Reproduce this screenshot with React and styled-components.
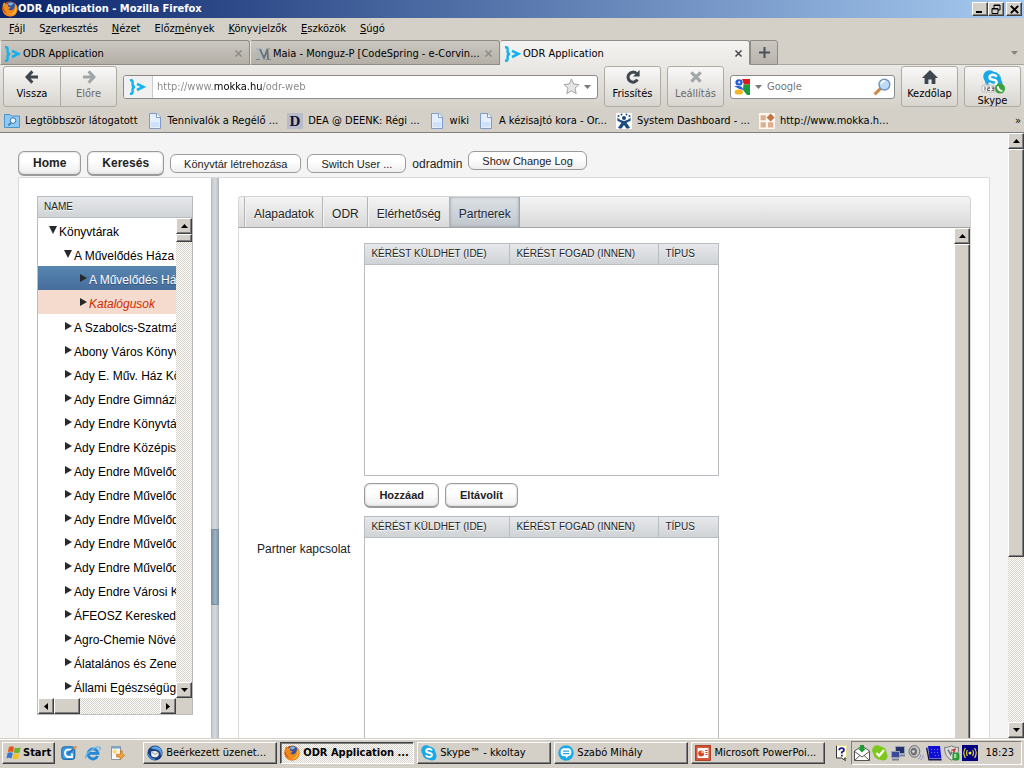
import { useState } from "react";
import styled, { createGlobalStyle, css } from "styled-components";

const menuItems = [
  ["", "F", "ájl"],
  ["S", "z", "erkesztés"],
  ["", "N", "ézet"],
  ["Előz", "m", "ények"],
  ["", "K", "önyvjelzők"],
  ["", "E", "szközök"],
  ["", "S", "úgó"],
];

const treeItems = [
  { name: "Könyvtárak", level: 0, open: true },
  { name: "A Művelődés Háza", level: 1, open: true },
  { name: "A Művelődés Ház", level: 2, kind: "selected" },
  { name: "Katalógusok", level: 2, kind: "marked" },
  { name: "A Szabolcs-Szatmár", level: 1 },
  { name: "Abony Város Könyvt", level: 1 },
  { name: "Ady E. Műv. Ház Kön", level: 1 },
  { name: "Ady Endre Gimnázi", level: 1 },
  { name: "Ady Endre Könyvtár", level: 1 },
  { name: "Ady Endre Középis", level: 1 },
  { name: "Ady Endre Művelőd", level: 1 },
  { name: "Ady Endre Művelőd", level: 1 },
  { name: "Ady Endre Művelőd", level: 1 },
  { name: "Ady Endre Művelőd", level: 1 },
  { name: "Ady Endre Művelőd", level: 1 },
  { name: "Ady Endre Városi Kö", level: 1 },
  { name: "ÁFEOSZ Keresked", level: 1 },
  { name: "Agro-Chemie Növén", level: 1 },
  { name: "Álatalános és Zene", level: 1 },
  { name: "Állami Egészségügy", level: 1 },
];

const pageTabs = ["Alapadatok", "ODR", "Elérhetőség", "Partnerek"];

/* ---------- icons ---------- */

const Firefox = () => (
  <svg width="16" height="16" viewBox="0 0 16 16">
    <circle cx="8" cy="8" r="7.6" fill="#d9580c" />
    <circle cx="8.6" cy="6.4" r="5.4" fill="#2b54a8" />
    <path d="M6 2.2Q9 .8 11.5 2.6Q9.8 5 7.4 4.4z" fill="#7fb2e8" />
    <path d="M1 3Q1.6 1.6 2.6 1.2Q2.8 2.8 4.2 3.2Q6 2.8 6.8 3.6Q5.6 4.6 6 5.6L8.6 6.2Q8 7.8 6.4 8Q7.4 9.8 9.8 9.2Q12 8.6 12.6 6Q13.4 3.6 12.4 2Q15.6 4 15.5 8.4Q15 15 8.2 15.6Q1 15 .5 8.6Q.4 5 1 3z" fill="#f08a1c" />
    <path d="M13.6 4.4Q15.2 7 14 10Q12 14 8 14Q12.6 12.4 13.6 8z" fill="#ffd84a" />
    <path d="M1 5Q1.4 10.6 5.4 12.4Q1.6 12 .8 8z" fill="#b03a0a" />
  </svg>
);

const OdrLogo = () => (
  <svg width="16" height="16" viewBox="0 0 16 16" fill="none" stroke="#12b2ee">
    <path d="M0 1.2H1Q2.6 1.2 2.6 3V5.8Q2.6 7.8 5 8Q2.6 8.2 2.6 10.2V13Q2.6 14.8 1 14.8H0" strokeWidth="2.4" />
    <path d="M7 4.8L13.4 7.9L7 11" strokeWidth="2.6" />
  </svg>
);

const MaiaIcon = () => (
  <svg width="16" height="16" viewBox="0 0 16 16" fill="none">
    <path d="M1 3H3.4L8 12.4M3 4V13" stroke="#a8b4bc" strokeWidth="1.4" />
    <path d="M5 3L9 12L12.4 3.4L13 13" stroke="#66727a" strokeWidth="1.8" />
    <path d="M1 13.5H5M11 13.5H16M11.4 3H15" stroke="#7b878f" strokeWidth="1.2" />
  </svg>
);

const CloseX = ({ color = "#4b4b4b", size = 9, width = 1.6 }) => (
  <svg width={size} height={size} viewBox="0 0 9 9">
    <path d="M1.5 1.5L7.5 7.5M7.5 1.5L1.5 7.5" stroke={color} strokeWidth={width} />
  </svg>
);

const ArrowLeft = () => (
  <svg width="14" height="14" viewBox="0 0 14 14">
    <path d="M7.4 1.4L2 7L7.4 12.6M2.6 7H13" fill="none" stroke="#3d474f" strokeWidth="3" />
  </svg>
);

const ArrowRight = () => (
  <svg width="14" height="14" viewBox="0 0 14 14">
    <path d="M6.6 1.4L12 7L6.6 12.6M11.4 7H1" fill="none" stroke="#a3a6a8" strokeWidth="3" />
  </svg>
);

const ReloadIcon = () => (
  <svg width="14" height="14" viewBox="0 0 14 14">
    <path d="M10.4 3.4A5 5 0 1 0 11.4 9.6" fill="none" stroke="#3d474f" strokeWidth="3" />
    <path d="M13.6 0V6.6H7z" fill="#3d474f" />
  </svg>
);

const HomeIcon = () => (
  <svg width="16" height="14" viewBox="0 0 16 14">
    <path d="M8 0L16 8H13.4V14H9.6V9.4H6.4V14H2.6V8H0z" fill="#3d474f" />
  </svg>
);

const StarIcon = () => (
  <svg width="17" height="17" viewBox="0 0 17 17">
    <path d="M8.5 1L10.7 6L16 6.5L12 10.1L13.2 15.6L8.5 12.8L3.8 15.6L5 10.1L1 6.5L6.3 6z" fill="#e6e6e6" stroke="#a2a2a2" />
  </svg>
);

const GoogleIcon = () => (
  <svg width="16" height="16" viewBox="0 0 16 16">
    <path d="M8 0H16V5.4H10z" fill="#e01818" />
    <path d="M9.4 5.4H16V16H13L9 11z" fill="#189a3e" />
    <ellipse cx="5" cy="3.4" rx="3.6" ry="3.2" fill="#2a5fd8" />
    <ellipse cx="5.2" cy="3.2" rx="1" ry="1.3" fill="#dfe8fb" />
    <path d="M0 7H5Q9 7.4 9 11L5.4 10z" fill="#2a5fd8" />
    <ellipse cx="4.8" cy="13" rx="4.2" ry="2.6" fill="#f4b520" />
  </svg>
);

const Magnifier = () => (
  <svg width="18" height="18" viewBox="0 0 18 18">
    <path d="M1.6 16.4L7.6 10.4" stroke="#c98a4a" strokeWidth="3" />
    <circle cx="11.4" cy="6.6" r="5.4" fill="#bcdcf6" stroke="#6f93c0" strokeWidth="1.4" />
    <path d="M8 6Q9 3 12 2.8" stroke="#fff" strokeWidth="1.6" fill="none" />
  </svg>
);

const SkypeCloud = ({ size = 16, phone }) => (
  <svg width={size} height={size} viewBox={phone ? "0 0 24 24" : "0 0 16 16"}>
    <g transform={phone ? "translate(2 0) scale(1.25)" : ""}>
      <circle cx="5.2" cy="5.2" r="5" fill="#19a9e6" />
      <circle cx="8" cy="8" r="6.6" fill="#19a9e6" />
      <circle cx="11" cy="11" r="4.6" fill="#19a9e6" />
      <path d="M11 5.4Q10 3.8 8 3.8Q5.2 4 5.2 6Q5.4 7.4 8 7.8Q11 8.2 11 10Q10.8 12 8 12Q5.6 12 5 10.2" fill="none" stroke="#fff" strokeWidth="1.9" />
    </g>
    {phone && (
      <>
        <rect x="1" y="15" width="14" height="7" rx="2" fill="#f2f2f2" stroke="#bbb" />
        <path d="M4 16.5v4M6.4 17h2v1.6h-2V20.5h2.6M10.6 17h2.4v3.4h-2.4M11 18.6h2" fill="none" stroke="#666" />
        <circle cx="19" cy="18.6" r="5" fill="#39a23c" />
        <path d="M16.8 16.2Q17 20.6 21.4 21" fill="none" stroke="#fff" strokeWidth="2" />
      </>
    )}
  </svg>
);

const FolderSearch = () => (
  <svg width="16" height="16" viewBox="0 0 16 16">
    <path d="M.5 1.5H6L7.5 3H15.5V14.5H.5z" fill="#8fc8f0" stroke="#4a94cc" />
    <circle cx="9" cy="7.6" r="2.8" fill="#e2f3ff" stroke="#3a78ac" />
    <path d="M7 9.8L4.4 12.4" stroke="#3a78ac" strokeWidth="1.6" />
  </svg>
);

const PageIcon = () => (
  <svg width="16" height="16" viewBox="0 0 16 16">
    <path d="M2.5 .5H10L13.5 4V15.5H2.5z" fill="#e4effe" stroke="#7f9cc8" />
    <path d="M9.5 .5V4.5H13.5" fill="#fff" stroke="#7f9cc8" />
    <path d="M4 9H12V14H4z" fill="#cfe0fa" />
  </svg>
);

const DIcon = () => (
  <svg width="16" height="16" viewBox="0 0 16 16">
    <rect width="16" height="16" fill="#b9bcc8" />
    <text x="8" y="13" textAnchor="middle" fontFamily="Liberation Serif, serif" fontWeight="bold" fontSize="15" fill="#10103a">D</text>
  </svg>
);

const JiraIcon = () => (
  <svg width="16" height="16" viewBox="0 0 16 16">
    <rect width="16" height="16" fill="#fff" />
    <g fill="#1b4a80">
      <circle cx="2.5" cy="3" r="1" />
      <circle cx="5.5" cy="1.4" r="1" />
      <circle cx="10.5" cy="1.4" r="1" />
      <circle cx="13.5" cy="3" r="1" />
      <circle cx="8" cy="5" r="2" />
      <path d="M1.2 4.8Q5 8 8 8Q11 8 14.8 4.8L14.4 8Q11 9 10.6 10L14 14.4L12.6 15.6H10.4L8 12L5.6 15.6H3.4L2 14.4L5.4 10Q5 9 1.6 8z" />
    </g>
  </svg>
);

const MokkaIcon = () => (
  <svg width="16" height="16" viewBox="0 0 16 16">
    <rect width="16" height="16" fill="#fff6ee" />
    <path d="M1.6 2.2H6.8V7.2H1.6zM1.6 9.2H6.8V14.4H1.6zM9 9.2H14.2V14.4H9z" fill="#ddae90" />
    <path d="M11.6 .4L15.6 4.4L11.6 8.4L7.6 4.4z" fill="#bd7748" />
  </svg>
);

const WindowsFlag = () => (
  <svg width="16" height="16" viewBox="0 0 16 16">
    <path d="M3 2Q5.4 .6 8 2L7 7.2Q4.4 5.8 1.8 7.2z" fill="#e8541c" />
    <path d="M8.8 2.4Q11.4 3.8 14.8 2.2L13.6 7.4Q10.6 8.8 7.8 7.4z" fill="#6cb52c" />
    <path d="M1.6 8Q4.2 6.6 6.8 8L5.6 13.4Q3 12 .4 13.4z" fill="#3a76d8" />
    <path d="M7.6 8.2Q10.4 9.6 13.4 8.2L12.2 13.6Q9.4 15 6.4 13.6z" fill="#f7bf1c" />
  </svg>
);

const DesktopIcon = () => (
  <svg width="16" height="16" viewBox="0 0 16 16">
    <rect x=".8" y="1.8" width="13" height="12.6" rx="2.5" fill="#3c9be0" stroke="#1a62a4" />
    <path d="M10.6 4.6H6.6Q4 5 4 8.2Q4 11.6 7 12H11V8.6" fill="none" stroke="#fff" strokeWidth="1.8" />
    <path d="M6.6 8.8L13.6 3" fill="none" stroke="#2c68a8" strokeWidth="1.6" />
    <path d="M12.4 4L15.4 1.4" stroke="#e88a34" strokeWidth="2" />
  </svg>
);

const ExplorerIcon = () => (
  <svg width="16" height="16" viewBox="0 0 16 16">
    <path d="M12.6 11A5 5 0 1 1 13 8.4H4" fill="none" stroke="#2488d8" strokeWidth="2.8" />
    <path d="M1 13.6Q-.4 10 6 5.4Q13 .4 15 2.4Q15.6 3.6 14.4 5.4" fill="none" stroke="#63b6ee" strokeWidth="1.3" />
  </svg>
);

const MailTask = () => (
  <svg width="16" height="16" viewBox="0 0 16 16">
    <path d="M2.5 1.5H11.5V14.5H2.5z" fill="#f6f8fb" stroke="#8c94a4" />
    <path d="M3 1.5H11V3.6H3z" fill="#7fa6cc" />
    <circle cx="5.8" cy="6.6" r="2.2" fill="#f6dc74" />
    <path d="M7.6 9.2H11.4V5.4L13.2 6V8.4L15.6 10.4L11 14.6V12H7.6z" fill="#eea63a" stroke="#bf701c" strokeWidth=".7" />
  </svg>
);

const Thunderbird = () => (
  <svg width="16" height="16" viewBox="0 0 16 16">
    <circle cx="8" cy="8" r="7.6" fill="#1c3f7c" />
    <path d="M3.6 3Q8 -.6 13 3Q16.4 7 14 11.6Q14.2 6 9.6 4.6Q5.4 4.2 3.6 3z" fill="#5aa3e4" />
    <path d="M4 6.6Q8 5 11.4 7.4Q12.6 10 10 12Q6.6 13 4.4 11z" fill="#f0f0ea" />
    <path d="M4.4 7L8.4 9.4L11 7.6" fill="none" stroke="#8c99a8" />
    <path d="M1 9Q2.6 14 8 14.4" fill="none" stroke="#4286cc" strokeWidth="1.6" />
  </svg>
);

const ChatIcon = () => (
  <svg width="16" height="16" viewBox="0 0 16 16">
    <circle cx="8" cy="8" r="7.7" fill="#19a9e6" />
    <path d="M5.4 3.2H10.6Q13.4 3.6 13.4 7.2Q13.4 10.6 10.4 11L8 13.6V11.2H5.4Q2.6 10.6 2.6 7.2Q2.6 3.6 5.4 3.2z" fill="#fff" />
    <path d="M5 6.2H11M5 8.6H11" stroke="#19a9e6" strokeWidth="1.3" />
  </svg>
);

const PowerPointIcon = () => (
  <svg width="16" height="16" viewBox="0 0 16 16">
    <rect x=".6" y=".6" width="14.8" height="14.8" fill="#d8593a" stroke="#a83a1c" />
    <rect x="2.6" y="3" width="10.8" height="10" fill="#fff" />
    <circle cx="6.2" cy="8.4" r="3" fill="#cc4a24" />
    <path d="M6.4 8.2V5.4A3 3 0 0 1 9.2 8.2z" fill="#f6c0a0" />
    <path d="M10 5.5H12.6M10.4 7.5H12.6M10.4 9.5H12.6" stroke="#cc4a24" />
  </svg>
);

const HelpIcon = () => (
  <svg width="12" height="16" viewBox="0 0 12 16">
    <path d="M.5 .5H10.5V13H8.5L9.5 15.5L5.5 13H.5z" fill="#fffff0" />
    <path d="M.5 .5V13H5.5L9.5 15.5L8.5 13H10.5" fill="none" stroke="#333" />
    <path d="M.5 .5H10.5V13" fill="none" stroke="#e6e08c" />
    <path d="M3.2 5.2Q3.2 3.2 5.6 3.2Q8 3.2 8 5Q8 6.2 5.8 7.2V8.6M5.8 9.8V11.6" fill="none" stroke="#1a1a8c" strokeWidth="1.8" />
  </svg>
);

const MailDown = () => (
  <svg width="16" height="16" viewBox="0 0 16 16">
    <path d="M.5 6L8 1L15.5 6V15.5H.5z" fill="#fff" stroke="#555" />
    <path d="M.5 6.4L8 12L15.5 6.4M.5 15.5L6 10.4M15.5 15.5L10 10.4" fill="none" stroke="#555" />
    <path d="M6 0H10V3.6H12.2L8 7.6L3.8 3.6H6z" fill="#1c9c34" />
  </svg>
);

const SkypeOnline = () => (
  <svg width="16" height="16" viewBox="0 0 16 16" fill="#7cc81c">
    <circle cx="5.2" cy="5.2" r="5" />
    <circle cx="8" cy="8" r="6.6" />
    <circle cx="11" cy="11" r="4.6" />
    <path d="M4.4 8L7.2 10.8L12 5" fill="none" stroke="#fff" strokeWidth="2.2" />
  </svg>
);

const NetworkIcon = () => (
  <svg width="16" height="16" viewBox="0 0 16 16">
    <rect x="5.5" y="1.5" width="9" height="7" fill="#24306c" stroke="#9aa2b8" />
    <path d="M9 10.5H15" stroke="#7a8298" strokeWidth="2" />
    <rect x="1.5" y="6.5" width="8" height="6" fill="#3a4c98" stroke="#9aa2b8" />
    <path d="M2 14.5H9" stroke="#7a8298" strokeWidth="2" />
  </svg>
);

const SpeakerIcon = () => (
  <svg width="16" height="16" viewBox="0 0 16 16">
    <ellipse cx="6.4" cy="6.4" rx="5.4" ry="5.8" fill="#c9c9c9" stroke="#6c6c6c" />
    <ellipse cx="5.8" cy="6.6" rx="3.2" ry="3.8" fill="#707070" />
    <circle cx="5.4" cy="6.6" r="1.4" fill="#ddd" />
    <path d="M10 14Q13 12.8 13 9.4M12.6 15Q15.4 13 15.4 10" fill="none" stroke="#8c94cc" />
  </svg>
);

const MonitorIcon = () => (
  <svg width="16" height="16" viewBox="0 0 16 16">
    <path d="M2 1H14L15.4 13.6H3.4z" fill="#1010d4" />
    <path d="M5 4.5H6M8 4.5H9M11 4.5H12M5 7.5H6M8 7.5H9M11 7.5H12M9 10.5H10M12 10.5H13" stroke="#6c7cff" />
    <path d="M.6 2.6L3 14.8H15.6" fill="none" stroke="#141450" strokeWidth="1.4" />
  </svg>
);

const ShieldIcon = () => (
  <svg width="16" height="16" viewBox="0 0 16 16">
    <path d="M.6 2.4Q5 2.6 7.4 .8Q10 2.6 14.6 2.4Q15 12 7.6 15.2Q.4 12 .6 2.4z" fill="#dcdcdc" stroke="#777" />
    <path d="M4 4.6L6.6 9.4L8 6.6" fill="none" stroke="#777" strokeWidth="1.6" />
    <path d="M7.4 5.4L11 4.4L9.4 8" fill="none" stroke="#c03030" strokeWidth="1.4" />
    <rect x="8.4" y="7.4" width="7" height="8" rx="2" fill="#2c9a3a" />
    <rect x="10" y="9" width="2.4" height="4" fill="#9be0a0" />
  </svg>
);

const RadioIcon = () => (
  <svg width="16" height="16" viewBox="0 0 16 16">
    <rect width="16" height="16" fill="#000080" />
    <g fill="none" stroke="#f0e428" strokeWidth="1.1">
      <path d="M5.4 5Q3.8 8 5.4 11M10.6 5Q12.2 8 10.6 11M3.4 3Q.2 8 3.4 13M12.6 3Q15.8 8 12.6 13" />
    </g>
    <circle cx="8" cy="8" r="1.5" fill="#f0e428" />
  </svg>
);

const arrowPaths = {
  up: "M0 4H7L3.5 0z",
  down: "M0 0H7L3.5 4z",
  left: "M4 0V7L0 3.5z",
  right: "M0 0V7L4 3.5z",
};

const Arrow = ({ dir, color = "#000" }) => {
  const flat = dir === "up" || dir === "down";
  return (
    <svg width={flat ? 7 : 4} height={flat ? 4 : 7}>
      <path d={arrowPaths[dir]} fill={color} />
    </svg>
  );
};

const TreeArrow = ({ open }) => (
  <svg width="8" height="8" viewBox="0 0 8 8">
    <path d={open ? "M0 0H8L4 8z" : "M1 0V8L8 4z"} fill="#26282b" />
  </svg>
);

/* ---------- classic windows scrollbar ---------- */

const ScrollBar = ({ horizontal, thumb }) => (
  <ScrollTrack $horizontal={horizontal}>
    <ScrollButton aria-label={horizontal ? "Balra" : "Fel"}>
      <Arrow dir={horizontal ? "left" : "up"} />
    </ScrollButton>
    <ScrollSpace $horizontal={horizontal}>
      <ScrollThumb $size={thumb} />
    </ScrollSpace>
    <ScrollButton aria-label={horizontal ? "Jobbra" : "Le"}>
      <Arrow dir={horizontal ? "right" : "down"} />
    </ScrollButton>
  </ScrollTrack>
);

const PartnerTable = ({ height }) => (
  <PartnerBox $height={height}>
    <PartnerGrid>
      <thead>
        <tr>
          <PartnerTh $width="144px">KÉRÉST KÜLDHET (IDE)</PartnerTh>
          <PartnerTh $width="149px">KÉRÉST FOGAD (INNEN)</PartnerTh>
          <PartnerTh>TÍPUS</PartnerTh>
        </tr>
      </thead>
      <tbody />
    </PartnerGrid>
  </PartnerBox>
);

const App = () => {
  const [tab, setTab] = useState("Partnerek");

  return (
    <>
      <GlobalStyle />
      <Window>
        <TitleBar>
          <Firefox />
          <TitleText>ODR Application - Mozilla Firefox</TitleText>
          <WindowButton aria-label="Kis méret">
            <svg width="12" height="10"><path d="M2 8H8" stroke="#000" strokeWidth="2" /></svg>
          </WindowButton>
          <WindowButton aria-label="Előző méret">
            <svg width="12" height="10">
              <path d="M4 1H10V6H8M4 1V4M4 1.5H10M2 4.5H8V9.5H2zM2 5H8" fill="none" stroke="#000" />
            </svg>
          </WindowButton>
          <WindowButton $last aria-label="Bezárás">
            <CloseX color="#000" size={11} width={1.6} />
          </WindowButton>
        </TitleBar>

        <MenuBar>
          {menuItems.map(([before, key, after]) => (
            <MenuItem key={key + after}>
              {before}
              <u>{key}</u>
              {after}
            </MenuItem>
          ))}
        </MenuBar>

        <BrowserTabs>
          <BrowserTab>
            <OdrLogo />
            <TabTitle>ODR Application</TabTitle>
            <CloseX color="#8f8c86" />
          </BrowserTab>
          <BrowserTab>
            <MaiaIcon />
            <TabTitle>Maia - Monguz-P [CodeSpring - e-Corvin...</TabTitle>
            <CloseX color="#8f8c86" />
          </BrowserTab>
          <BrowserTab $active>
            <OdrLogo />
            <TabTitle>ODR Application</TabTitle>
            <CloseX />
          </BrowserTab>
          <NewTab aria-label="Új lap">
            <svg width="11" height="11"><path d="M5.5 0V11M0 5.5H11" stroke="#4a5258" strokeWidth="2" /></svg>
          </NewTab>
          <TabsMenu aria-label="Lapok"><Arrow dir="down" color="#85827c" /></TabsMenu>
        </BrowserTabs>

        <NavBar>
          <NavGroup>
            <NavButton $joined><ArrowLeft />Vissza</NavButton>
            <NavButton $joined $disabled><ArrowRight />Előre</NavButton>
          </NavGroup>
          <UrlBox>
            <Identity><OdrLogo /></Identity>
            <UrlInput aria-label="Cím" defaultValue="http://www.mokka.hu/odr-web" />
            <StarIcon />
            <Arrow dir="down" color="#777" />
          </UrlBox>
          <NavButton><ReloadIcon />Frissítés</NavButton>
          <NavButton $disabled><CloseX color="#a3a6a8" size={14} width={2} />Leállítás</NavButton>
          <SearchBox>
            <GoogleIcon />
            <Arrow dir="down" color="#777" />
            <SearchInput aria-label="Keresés" placeholder="Google" />
            <Magnifier />
          </SearchBox>
          <NavButton><HomeIcon />Kezdőlap</NavButton>
          <NavButton><SkypeCloud size={24} phone />Skype</NavButton>
        </NavBar>

        <Bookmarks>
          <Bookmark href="#"><FolderSearch />Legtöbbször látogatott</Bookmark>
          <Bookmark href="#"><PageIcon />Tennivalók a Regélő ...</Bookmark>
          <Bookmark href="#"><DIcon />DEA @ DEENK: Régi ...</Bookmark>
          <Bookmark href="#"><PageIcon />wiki</Bookmark>
          <Bookmark href="#"><PageIcon />A kézisajtó kora - Or...</Bookmark>
          <Bookmark href="#"><JiraIcon />System Dashboard - ...</Bookmark>
          <Bookmark href="#"><MokkaIcon />http://www.mokka.h...</Bookmark>
          <More aria-label="További könyvjelzők">»</More>
        </Bookmarks>

        <Viewport>
          <Page>
            <PageToolbar>
              <ToolbarGroup>
                <MainButton>Home</MainButton>
                <MainButton>Keresés</MainButton>
                <SmallButton>Könyvtár létrehozása</SmallButton>
                <SmallButton>Switch User ...</SmallButton>
                <span>odradmin</span>
              </ToolbarGroup>
              <SmallButton>Show Change Log</SmallButton>
            </PageToolbar>

            <SplitPanel>
              <LeftPane>
                <TreeBox>
                  <TreeHeader>NAME</TreeHeader>
                  <TreeBody>
                    <TreeList>
                      {treeItems.map((item, i) => (
                        <TreeRow key={i} $level={item.level} $kind={item.kind}>
                          <TreeArrow open={item.open} />
                          {item.name}
                        </TreeRow>
                      ))}
                    </TreeList>
                    <ScrollBar thumb={8} />
                  </TreeBody>
                  <TreeFooter>
                    <ScrollBar horizontal thumb={26} />
                  </TreeFooter>
                </TreeBox>
              </LeftPane>
              <Splitter><SplitHandle /></Splitter>
              <RightPane>
                <TabBar>
                  {pageTabs.map((name) => (
                    <PageTab key={name} $active={tab === name} onClick={() => setTab(name)}>
                      {name}
                    </PageTab>
                  ))}
                </TabBar>
                <TabContent>
                  <Form>
                    <FormLabel>Partner kapcsolat</FormLabel>
                    <FormField>
                      <PartnerTable height={233} />
                      <FieldButtons>
                        <MainButton $compact>Hozzáad</MainButton>
                        <MainButton $compact>Eltávolít</MainButton>
                      </FieldButtons>
                      <PartnerTable height={338} />
                    </FormField>
                  </Form>
                  <ScrollBar thumb={600} />
                </TabContent>
              </RightPane>
            </SplitPanel>
          </Page>
          <ScrollBar thumb={408} />
        </Viewport>

        <TaskBar>
          <StartButton><WindowsFlag />Start</StartButton>
          <QuickLaunch>
            <DesktopIcon />
            <ExplorerIcon />
            <MailTask />
          </QuickLaunch>
          <Tasks>
            <Task><Thunderbird />Beérkezett üzenet...</Task>
            <Task $active><Firefox />ODR Application ...</Task>
            <Task><SkypeCloud />Skype™ - kkoltay</Task>
            <Task><ChatIcon />Szabó Mihály</Task>
            <Task><PowerPointIcon />Microsoft PowerPoi...</Task>
          </Tasks>
          <HelpIcon />
          <Tray>
            <MailDown />
            <SkypeOnline />
            <NetworkIcon />
            <SpeakerIcon />
            <MonitorIcon />
            <ShieldIcon />
            <RadioIcon />
            <Clock>18:23</Clock>
          </Tray>
        </TaskBar>
      </Window>
    </>
  );
};
export default App;

const uiFont = `"DejaVu Sans Condensed", "DejaVu Sans", sans-serif`;
const pageFont = `"Liberation Sans", Arial, sans-serif`;

const GlobalStyle = createGlobalStyle`
  * {
    box-sizing: border-box;
  }
  body {
    margin: 0;
    background: #d4d0c8;
  }
  button, input {
    margin: 0;
    padding: 0;
    border: 0;
    background: none;
    color: inherit;
    font: inherit;
  }
  svg {
    flex: none;
  }
`;

const raised = css`
  border: 1px solid;
  border-color: #fff #404040 #404040 #fff;
  box-shadow: inset -1px -1px #808080;
  background: #d4d0c8;
`;

const dither = css`
  background: conic-gradient(#fff 25%, #d4d0c8 0 50%, #fff 0 75%, #d4d0c8 0) 0 0 / 2px 2px;
`;

const Window = styled.div`
  display: flex;
  flex-direction: column;
  height: 100vh;
  overflow: hidden;
  font: 11px/14px ${uiFont};
  color: #000;
  background: #d4d0c8;
  white-space: nowrap;
`;

const TitleBar = styled.header`
  display: flex;
  align-items: center;
  height: 18px;
  flex: none;
  padding: 0 2px;
  background: linear-gradient(90deg, #0a246a, #a6caf0);
`;

const TitleText = styled.span`
  flex: 1;
  color: #fff;
  font-weight: bold;
`;

const WindowButton = styled.button`
  ${raised}
  width: 16px;
  height: 14px;
  display: flex;
  align-items: center;
  justify-content: center;
  margin-left: ${(props) => (props.$last ? "2px" : "0")};
`;

const MenuBar = styled.nav`
  display: flex;
  flex: none;
  align-items: center;
  height: 22px;
  padding-left: 2px;
`;

const MenuItem = styled.button`
  padding: 0 7px;
`;

const BrowserTabs = styled.div`
  display: flex;
  flex: none;
  height: 25px;
`;

const BrowserTab = styled.div`
  flex: 0 1 250px;
  min-width: 0;
  display: flex;
  align-items: center;
  gap: 2px;
  padding: 2px 6px 0 4px;
  border: 1px solid #8f8c86;
  border-left-color: #e8e6e2;
  border-radius: 3px 3px 0 0;
  background: linear-gradient(#cbc8c1, #b3afa7);
  ${(props) =>
    props.$active &&
    css`
      background: linear-gradient(#f4f3f1, #ebe9e6);
      border-bottom-color: #ebe9e6;
    `}
`;

const TabTitle = styled.span`
  flex: 1;
  overflow: hidden;
`;

const NewTab = styled.button`
  width: 28px;
  padding-top: 4px;
  border: 1px solid #8f8c86;
  border-radius: 0 3px 0 0;
  background: linear-gradient(#cbc8c1, #b8b4ad);
`;

const TabsMenu = styled.button`
  flex: 1;
  text-align: right;
  padding-right: 6px;
  border-bottom: 1px solid #aaa7a0;
`;

const NavBar = styled.div`
  display: flex;
  flex: none;
  align-items: center;
  gap: 6px;
  height: 45px;
  padding: 0 3px 2px;
  background: linear-gradient(#ebe9e6, #d4d0c8);
`;

const NavGroup = styled.div`
  display: flex;
  border: 1px solid #aeaba5;
  border-radius: 3px;
  background: linear-gradient(#f8f8f7, #d8d5cf);
`;

const NavButton = styled.button`
  width: 57px;
  height: 41px;
  display: flex;
  flex-direction: column;
  align-items: center;
  justify-content: space-between;
  padding: 3px 0 5px;
  color: ${(props) => (props.$disabled ? "#6a6a6a" : "#000")};
  ${(props) =>
    props.$joined
      ? css`
          height: 39px;
          width: 56px;
          & + & {
            border-left: 1px solid #aeaba5;
          }
        `
      : css`
          border: 1px solid #aeaba5;
          border-radius: 3px;
          background: linear-gradient(#f8f8f7, #d8d5cf);
        `}
  &:last-child {
    padding-bottom: ${(props) => (props.$joined ? "5px" : "0")};
  }
`;

const UrlBox = styled.div`
  flex: 1;
  min-width: 0;
  display: flex;
  align-items: center;
  gap: 4px;
  height: 24px;
  padding-right: 6px;
  border: 1px solid #8a8a8a;
  border-radius: 3px;
  background: #fff;
  overflow: hidden;
`;

const Identity = styled.div`
  display: flex;
  align-items: center;
  justify-content: center;
  align-self: stretch;
  width: 29px;
  border-right: 1px solid #ccc;
  background: #f1f1f1;
`;

/* the domain part is darker than the rest of the address */
const UrlInput = styled.input`
  flex: 1;
  min-width: 0;
  outline: none;
  color: transparent;
  background: linear-gradient(90deg, #858585 57px, #000 57px 105px, #858585 105px);
  background-clip: text;
  -webkit-background-clip: text;
`;

const SearchBox = styled.div`
  flex: 0 0 165px;
  min-width: 0;
  display: flex;
  align-items: center;
  gap: 5px;
  height: 24px;
  padding: 0 3px;
  border: 1px solid #8a8a8a;
  border-radius: 3px;
  background: #fff;
`;

const SearchInput = styled.input`
  flex: 1;
  width: 0;
  min-width: 0;
  outline: none;
  &::placeholder {
    color: #777;
  }
`;

const Bookmarks = styled.nav`
  display: flex;
  flex: none;
  align-items: center;
  gap: 9px;
  height: 23px;
  padding: 0 3px 0 4px;
  border-bottom: 1px solid #808080;
`;

const Bookmark = styled.a`
  display: flex;
  align-items: center;
  gap: 5px;
  color: #000;
  text-decoration: none;
`;

const More = styled.button`
  margin-left: auto;
`;

const Viewport = styled.main`
  flex: 1;
  min-height: 0;
  display: flex;
`;

const Page = styled.div`
  flex: 1;
  min-width: 0;
  overflow: hidden;
  padding: 18px 18px 0;
  font: 12px/16px ${pageFont};
  color: #222;
  background: #f4f4f4;
`;

const PageToolbar = styled.div`
  display: flex;
  align-items: flex-start;
  gap: 6px;
  height: 26px;
`;

const ToolbarGroup = styled.div`
  display: flex;
  align-items: center;
  gap: 6px;
`;

const MainButton = styled.button`
  height: 25px;
  padding: 0 14px;
  border: 1px solid #9b9b9b;
  border-bottom-width: 2px;
  border-radius: 6px;
  background: linear-gradient(#fff, #fff 40%, #eee);
  box-shadow: inset 0 0 2px #bbb;
  font-size: ${(props) => (props.$compact ? "11px" : "12px")};
  font-weight: bold;
  color: #222;
`;

const SmallButton = styled.button`
  height: 19px;
  padding: 0 13px;
  border: 1px solid #9b9b9b;
  border-radius: 6px;
  background: linear-gradient(#fff 40%, #eee);
  font-size: 11px;
  line-height: 14px;
`;

const SplitPanel = styled.div`
  display: flex;
  min-height: 780px;
  border: 1px solid #dadada;
  background: #fff;
`;

const LeftPane = styled.div`
  flex: 0 0 192px;
  min-width: 0;
  padding: 18px;
`;

const headCell = css`
  height: 21px;
  padding: 0 6px;
  font-size: 10px;
  line-height: 20px;
  font-weight: normal;
  text-align: left;
  text-shadow: 0 1px #fff;
  background: linear-gradient(#e6e8ea, #d0d3d6);
  border-bottom: 1px solid #b9bdc1;
`;

const TreeBox = styled.div`
  border: 1px solid #b9bdc1;
`;

const TreeHeader = styled.div`
  ${headCell}
`;

const TreeBody = styled.div`
  display: flex;
`;

const TreeList = styled.ul`
  flex: 1;
  min-width: 0;
  overflow: hidden;
  margin: 0;
  padding: 0;
  list-style: none;
`;

const TreeRow = styled.li`
  display: flex;
  align-items: center;
  gap: 2px;
  height: 24px;
  padding-top: 3px;
  padding-left: ${(props) => 11 + props.$level * 15}px;
  color: #000;
  & > svg {
    margin-bottom: 4px;
  }
  ${(props) =>
    props.$kind === "selected" &&
    css`
      color: #fff;
      text-shadow: 0 1px #31507c;
      background: linear-gradient(#5686b0, #466c9c);
    `}
  ${(props) =>
    props.$kind === "marked" &&
    css`
      color: #d02c00;
      font-style: italic;
      background: #f5dace;
    `}
`;

const TreeFooter = styled.div`
  padding-right: 16px;
  background: #d4d0c8;
`;

const ScrollTrack = styled.div`
  display: flex;
  flex: none;
  flex-direction: ${(props) => (props.$horizontal ? "row" : "column")};
  ${(props) => (props.$horizontal ? "height: 16px;" : "width: 16px;")}
  ${dither}
`;

const ScrollButton = styled.button`
  ${raised}
  flex: none;
  width: 16px;
  height: 16px;
  display: flex;
  align-items: center;
  justify-content: center;
`;

const ScrollSpace = styled.div`
  flex: 1;
  display: flex;
  flex-direction: ${(props) => (props.$horizontal ? "row" : "column")};
`;

const ScrollThumb = styled.div`
  ${raised}
  flex: 0 0 ${(props) => props.$size}px;
`;

const Splitter = styled.div`
  flex: 0 0 8px;
  display: flex;
  flex-direction: column;
  justify-content: center;
  background: linear-gradient(90deg, #b4b8bb, #cdd1d4 25%, #d6d9dc 60%, #b0b3b6);
`;

const SplitHandle = styled.div`
  height: 76px;
  border: 1px solid #7890a4;
  background: linear-gradient(90deg, #8397a9, #9fb2c2 60%, #8095a7);
`;

const RightPane = styled.div`
  flex: 1;
  min-width: 0;
  display: flex;
  flex-direction: column;
  padding: 18px 18px 18px 19px;
`;

const TabBar = styled.div`
  display: flex;
  flex: none;
  height: 32px;
  padding-left: 5px;
  border: 1px solid #d4d4d4;
  border-bottom-color: #a4a4a4;
  border-radius: 4px 4px 0 0;
  background: linear-gradient(#f4f4f4, #d9d9d9);
`;

const PageTab = styled.button`
  padding: 3px 8px 0 9px;
  border-left: 1px solid #b4b4b4;
  box-shadow: inset 1px 0 #f4f4f4;
  text-shadow: 0 1px #fff;
  ${(props) =>
    props.$active &&
    css`
      color: #1c2733;
      border-right: 1px solid #a0a4a8;
      background: linear-gradient(#dde2e6, #bfc6cc);
      box-shadow: inset 0 0 3px #8f979d;
      text-shadow: 0 1px #e4e8ec;
    `}
`;

const TabContent = styled.div`
  flex: 1;
  min-height: 0;
  display: flex;
  border: 1px solid #dadada;
  border-top: 0;
`;

const Form = styled.div`
  flex: 1;
  display: flex;
  align-items: center;
  align-self: flex-start;
  gap: 14px;
  padding: 15px 18px;
`;

const FormLabel = styled.span`
  line-height: 16px;
`;

const FormField = styled.div`
  flex: 0 1 355px;
  min-width: 0;
`;

const PartnerBox = styled.div`
  height: ${(props) => props.$height}px;
  border: 1px solid #b9bdc1;
`;

const PartnerGrid = styled.table`
  width: 100%;
  table-layout: fixed;
  border-collapse: separate;
  border-spacing: 0;
`;

const PartnerTh = styled.th`
  ${headCell}
  width: ${(props) => props.$width || "auto"};
  & + & {
    border-left: 1px solid #b9bdc1;
  }
`;

const FieldButtons = styled.div`
  display: flex;
  gap: 6px;
  padding: 7px 0 8px;
`;

const TaskBar = styled.footer`
  display: flex;
  flex: none;
  align-items: center;
  height: 30px;
  padding: 2px 2px 3px;
  border-top: 1px solid #d4d0c8;
  box-shadow: inset 0 1px #fff;
  background: #d4d0c8;
`;

const StartButton = styled.button`
  ${raised}
  display: flex;
  align-items: center;
  gap: 1px;
  height: 22px;
  padding: 0 3px;
  font-weight: bold;
`;

const QuickLaunch = styled.div`
  display: flex;
  gap: 8px;
  padding: 0 18px 0 6px;
`;

const Tasks = styled.div`
  flex: 1;
  min-width: 0;
  display: flex;
  gap: 3px;
  padding-right: 11px;
`;

const Task = styled.button`
  ${raised}
  flex: 1 1 134px;
  min-width: 0;
  display: flex;
  align-items: center;
  gap: 3px;
  height: 22px;
  padding: 0 3px;
  overflow: hidden;
  ${(props) =>
    props.$active &&
    css`
      ${dither}
      border-color: #404040 #fff #fff #404040;
      box-shadow: inset 1px 1px #808080;
      font-weight: bold;
    `}
`;

const Tray = styled.div`
  display: flex;
  align-items: center;
  gap: 2px;
  height: 24px;
  margin-left: 3px;
  padding: 0 7px 0 2px;
  border: 1px solid;
  border-color: #808080 #fff #fff #808080;
`;

const Clock = styled.span`
  margin-left: 5px;
`;
